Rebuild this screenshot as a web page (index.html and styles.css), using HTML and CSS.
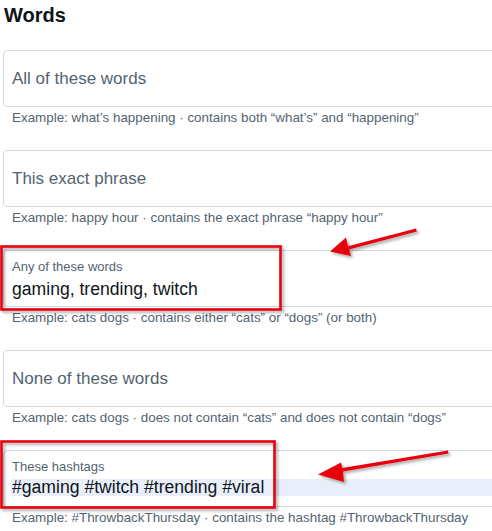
FILE: index.html
```html
<!DOCTYPE html>
<html>
<head>
<meta charset="utf-8">
<link rel="stylesheet" href="styles.css">
</head>
<body>
<div class="page">
  <h2 class="title">Words</h2>
  <div class="fields">
    <div class="group">
      <div class="field"><span class="placeholder">All of these words</span></div>
      <div class="help">Example: what’s happening · contains both “what’s” and “happening”</div>
    </div>
    <div class="group">
      <div class="field"><span class="placeholder">This exact phrase</span></div>
      <div class="help">Example: happy hour · contains the exact phrase “happy hour”</div>
    </div>
    <div class="group">
      <div class="field filled">
        <span class="label">Any of these words</span>
        <span class="value">gaming, trending, twitch</span>
      </div>
      <div class="help">Example: cats dogs · contains either “cats” or “dogs” (or both)</div>
    </div>
    <div class="group">
      <div class="field"><span class="placeholder">None of these words</span></div>
      <div class="help">Example: cats dogs · does not contain “cats” and does not contain “dogs”</div>
    </div>
    <div class="group">
      <div class="field filled">
        <span class="label">These hashtags</span>
        <span class="value selected">#gaming #twitch #trending #viral</span>
      </div>
      <div class="help">Example: #ThrowbackThursday · contains the hashtag #ThrowbackThursday</div>
    </div>
  </div>
  <svg class="annotations" width="492" height="531" viewBox="0 0 492 531">
    <defs>
      <filter id="sh" x="-20%" y="-20%" width="140%" height="140%">
        <feDropShadow dx="2" dy="2" stdDeviation="1.5" flood-color="#000" flood-opacity="0.35"/>
      </filter>
    </defs>
    <g filter="url(#sh)">
      <rect x="1.5" y="246.5" width="279" height="63" fill="none" stroke="#e8000b" stroke-width="2.6"/>
      <rect x="1.5" y="441.5" width="273" height="66" fill="none" stroke="#e8000b" stroke-width="2.6"/>
      <polygon fill="#e8000b" points="416,228.5 416.8,231.5 349,249.5 351,256 330,251.5 346,237.5 348,246.3"/>
      <polygon fill="#e8000b" points="448,450.5 448.5,453.5 343,471.5 344,482 318,474.5 341,462.5 342.3,468"/>
    </g>
  </svg>
</div>
</body>
</html>
```

FILE: styles.css
```css
html, body {
  margin: 0;
  padding: 0;
  background: #ffffff;
}
.page {
  position: relative;
  width: 492px;
  height: 531px;
  overflow: hidden;
  font-family: "Segoe UI", "Liberation Sans", Arial, sans-serif;
  color: #0f1419;
}
.title {
  margin: 0;
  padding: 4px 0 0 4px;
  height: 50px;
  box-sizing: border-box;
  font-size: 20px;
  font-weight: 700;
  line-height: 22px;
  color: #0f1419;
}
.fields {
  display: flex;
  flex-direction: column;
  padding-left: 3px;
}
.group {
  height: 100px;
  display: flex;
  flex-direction: column;
}
.field {
  width: 520px;
  height: 57px;
  box-sizing: border-box;
  border: 1px solid #cfd9de;
  border-radius: 4px;
  padding: 0 8px;
  display: flex;
  flex-direction: column;
  justify-content: center;
}
.placeholder {
  font-size: 17px;
  color: #536471;
  line-height: 20px;
}
.field.filled {
  justify-content: flex-start;
  padding-top: 8px;
}
.label {
  font-size: 13px;
  line-height: 16px;
  color: #536471;
}
.value {
  font-size: 17.6px;
  line-height: 20px;
  margin-top: 4px;
  color: #0f1419;
}
.value.selected {
  display: block;
  height: 17px;
  line-height: 17px;
  margin-top: 4px;
  margin-left: -1px;
  padding-left: 1px;
  background: #e8effb;
}
.help {
  padding: 2px 0 0 9px;
  font-size: 13.4px;
  line-height: 17px;
  color: #536471;
  white-space: nowrap;
}
.annotations {
  position: absolute;
  left: 0;
  top: 0;
  pointer-events: none;
}
```
